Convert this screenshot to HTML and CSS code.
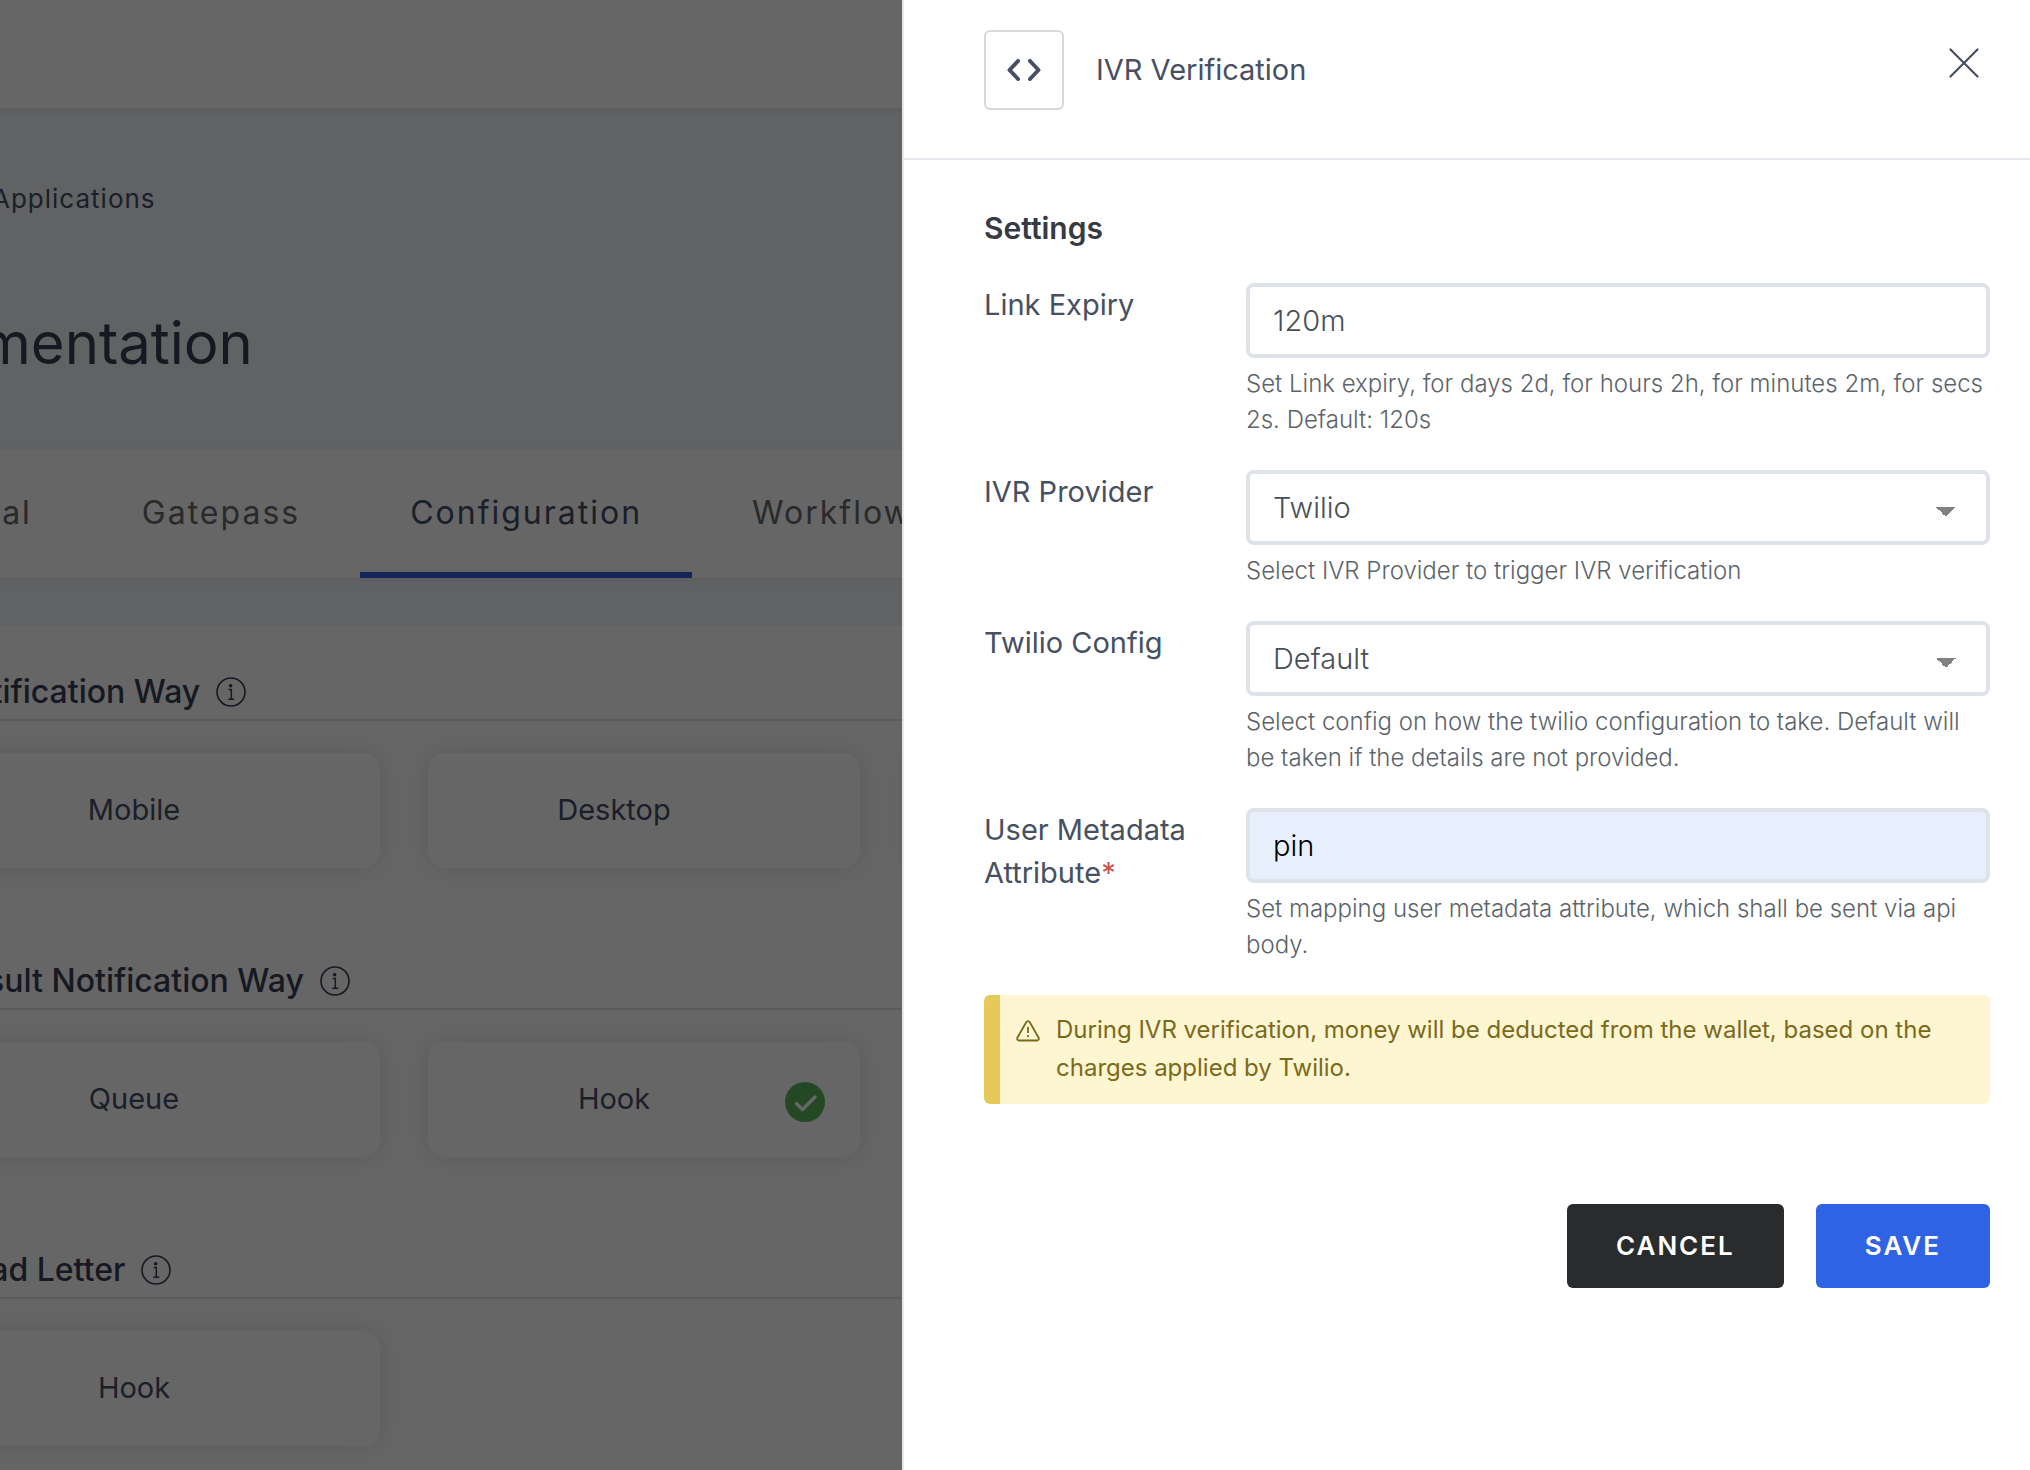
FILE: index.html
```html
<!DOCTYPE html>
<html lang="en">
<head>
<meta charset="utf-8">
<title>IVR Verification</title>
<link rel="stylesheet" href="styles.css">
</head>
<body>
<svg class="sprite" aria-hidden="true">
  <symbol id="info" viewBox="0 0 30 30">
    <circle cx="15" cy="15" r="14" fill="none" stroke="currentColor" stroke-width="1.6"/>
    <circle cx="14.6" cy="8.8" r="1.8" fill="currentColor"/>
    <path d="M12.6 12.6h2.7v9.5M12.2 22.2h6" fill="none" stroke="currentColor" stroke-width="1.5"/>
  </symbol>
</svg>
<div class="page" inert>
  <header class="topbar"></header>
  <nav class="crumbs" aria-label="Breadcrumb"><a href="#">Applications</a></nav>
  <h1 class="page-title">Documentation</h1>
  <nav class="tabs" aria-label="Sections">
    <a class="tab" href="#">General</a>
    <a class="tab" href="#">Gatepass</a>
    <a class="tab tab-active" href="#">Configuration</a>
    <a class="tab" href="#">Workflow</a>
  </nav>
  <main class="content">
    <section class="group">
      <h2 class="group-title">Notification Way <svg class="info"><use href="#info"/></svg></h2>
      <div class="cards">
        <button class="card" type="button">Mobile</button>
        <button class="card" type="button">Desktop</button>
        <div class="card"></div>
      </div>
    </section>
    <section class="group">
      <h2 class="group-title">Result Notification Way <svg class="info"><use href="#info"/></svg></h2>
      <div class="cards">
        <button class="card" type="button">Queue</button>
        <button class="card" type="button">Hook
          <svg class="check" viewBox="0 0 40 40"><circle cx="20" cy="20" r="20" fill="#5ab45a"/><path d="M11.5 21.5l6 6L30 15" fill="none" stroke="#fff" stroke-width="3.4" stroke-linecap="round" stroke-linejoin="round"/></svg>
        </button>
      </div>
    </section>
    <section class="group">
      <h2 class="group-title">Dead Letter <svg class="info"><use href="#info"/></svg></h2>
      <div class="cards">
        <button class="card" type="button">Hook</button>
      </div>
    </section>
  </main>
</div>
<div class="backdrop"></div>
<aside class="drawer" role="dialog" aria-labelledby="drawer-title">
  <header class="drawer-head">
    <span class="badge"><svg width="34" height="22" viewBox="0 0 34 22"><path d="M11 2L2.500 11l8.500 9M23 2l8.500 9-8.500 9" fill="none" stroke="currentColor" stroke-width="4" stroke-linecap="round" stroke-linejoin="round"/></svg></span>
    <h2 class="drawer-title" id="drawer-title">IVR Verification</h2>
    <button class="close" type="button" aria-label="Close"><svg width="30" height="30" viewBox="0 0 30 30"><path d="M1.500 1.500l27 27M28.500 1.500l-27 27" stroke="currentColor" stroke-width="2.200" stroke-linecap="round"/></svg></button>
  </header>
  <form class="form">
    <h3 class="form-title">Settings</h3>
    <div class="row">
      <label class="label" for="expiry">Link Expiry</label>
      <div class="field">
        <input class="control" id="expiry" type="text" value="120m">
        <p class="hint">Set Link expiry, for days 2d, for hours 2h, for minutes 2m, for secs 2s. Default: 120s</p>
      </div>
    </div>
    <div class="row">
      <label class="label" for="provider">IVR Provider</label>
      <div class="field">
        <select class="control select" id="provider"><option>Twilio</option></select>
        <p class="hint">Select IVR Provider to trigger IVR verification</p>
      </div>
    </div>
    <div class="row">
      <label class="label" for="config">Twilio Config</label>
      <div class="field">
        <select class="control select" id="config"><option>Default</option></select>
        <p class="hint">Select config on how the twilio configuration to take. Default will be taken if the details are not provided.</p>
      </div>
    </div>
    <div class="row">
      <label class="label" for="attribute">User Metadata Attribute<span class="required">*</span></label>
      <div class="field">
        <input class="control filled" id="attribute" type="text" value="pin">
        <p class="hint">Set mapping user metadata attribute, which shall be sent via api body.</p>
      </div>
    </div>
    <div class="alert" role="note">
      <svg class="alert-icon" viewBox="0 0 24 22"><path d="M10.200 2.200L1.500 17.500c-.8 1.500 0 3 1.700 3h17.600c1.700 0 2.500-1.500 1.700-3L13.800 2.200c-.8-1.400-2.800-1.400-3.600 0z" fill="none" stroke="currentColor" stroke-width="1.800" stroke-linejoin="round"/><path d="M12 7v6M12 15v2" stroke="currentColor" stroke-width="1.800"/></svg>
      <p class="alert-text">During IVR verification, money will be deducted from the wallet, based on the charges applied by Twilio.</p>
    </div>
    <div class="actions">
      <button class="btn btn-dark" type="button">CANCEL</button>
      <button class="btn btn-primary" type="submit">SAVE</button>
    </div>
  </form>
</aside>
</body>
</html>
```
FILE: styles.css
```css
* { box-sizing: border-box; }
body {
  margin: 0;
  overflow: hidden;
  font-family: Inter, "Liberation Sans", sans-serif;
  font-size: 29px;
  color: #475062;
}
h1, h2, h3, p { margin: 0; font-weight: 400; }
button, input, select { font: inherit; color: inherit; margin: 0; }
a { color: inherit; text-decoration: none; }
.sprite { position: absolute; width: 0; height: 0; }

/* Page behind the drawer, scrolled to the right */
.page {
  height: 100vh;
  margin-left: -168px;
  overflow: hidden;
  background: #f2f5f8;
  color: #454e68;
}
.topbar { height: 108px; background: #fff; box-shadow: 0 2px 10px rgba(0, 0, 0, .08); }
.crumbs { padding: 72px 0 0 160px; font-size: 26px; line-height: 38px; letter-spacing: 1px; }
.page-title { padding: 89px 0 71px 4px; font-size: 58px; line-height: 72px; color: #373f55; }
.tabs {
  display: flex;
  gap: 10px;
  padding-left: 18px;
  background: #fff;
  box-shadow: 0 2px 8px rgba(0, 0, 0, .06);
}
.tab {
  padding: 43px 50px 39px;
  border-bottom: 6px solid transparent;
  font-size: 32px;
  line-height: 40px;
  letter-spacing: 2px;
  color: #696969;
}
.tab-active { border-color: #2e60e0; color: #454e68; }
.content { margin-top: 48px; padding: 43px 0 0 116px; background: #fff; }
.group { height: 289px; }
.group-title {
  display: flex;
  align-items: center;
  gap: 16px;
  padding-bottom: 4px;
  border-bottom: 2px solid #e4e4e4;
  font-size: 32px;
  font-weight: 500;
  line-height: 46px;
  color: #373f55;
}
.info { width: 30px; height: 30px; }
.cards { display: flex; gap: 48px; padding-top: 32px; }
.card {
  position: relative;
  flex: none;
  width: 432px;
  height: 115px;
  padding: 0 60px 2px 0;
  border: 0;
  border-radius: 16px;
  background: #fff;
  box-shadow: 0 0 24px rgba(0, 0, 0, .12);
}
.check { position: absolute; top: 40px; right: 35px; width: 40px; height: 40px; }

.backdrop { position: fixed; inset: 0; background: rgba(0, 0, 0, .6); }

.drawer {
  position: fixed;
  inset: 0 0 0 auto;
  width: 1128px;
  max-width: 100%;
  overflow: auto;
  border-left: 2px solid #e8e8e8;
  background: #fff;
}
.drawer-head {
  display: flex;
  align-items: center;
  padding: 30px 47px 48px 80px;
  border-bottom: 2px solid #e8e8ee;
}
.badge {
  display: grid;
  place-items: center;
  width: 80px;
  height: 80px;
  border: 2px solid #d9d9d9;
  border-radius: 6px;
}
.drawer-title { flex: 1; margin-left: 32px; font-size: 29px; line-height: 40px; }
.close { display: grid; padding: 4px; margin-bottom: 14px; border: 0; background: none; }
.form { padding: 47px 40px 48px 80px; }
.form-title { margin-bottom: 34px; font-size: 30px; font-weight: 600; line-height: 42px; color: #383a42; }
.row { display: grid; grid-template-columns: 262px 1fr; margin-bottom: 32px; }
.label { padding-right: 40px; line-height: 43px; }
.required { color: #c9524a; }
.control {
  display: block;
  width: 100%;
  height: 75px;
  padding: 0 23px;
  border: 4px solid #dee2eb;
  border-radius: 8px;
  background-color: #fff;
  font-weight: 300;
  color: #495057;
}
.select {
  appearance: none;
  background-image: linear-gradient(to bottom left, #808080 50%, transparent 50%), linear-gradient(to bottom right, #808080 50%, transparent 50%);
  background-size: 10px 10px;
  background-repeat: no-repeat;
  background-position: right 40px top 33px, right 30px top 33px;
}
.filled { background-color: #e8effc; color: #000; }
.hint { margin-top: 8px; font-size: 24px; font-weight: 300; line-height: 36px; color: #5c646a; }
.alert {
  display: flex;
  gap: 16px;
  padding: 16px 16px 17px;
  border-left: 16px solid #e5ca5a;
  border-radius: 6px;
  background: #fef5d1;
  font-size: 24px;
  font-weight: 500;
  line-height: 38px;
  color: #7a6a1c;
}
.alert-icon { flex: none; width: 24px; height: 22px; margin-top: 9px; }
.actions { display: flex; justify-content: flex-end; gap: 32px; margin-top: 100px; }
.btn {
  height: 84px;
  padding: 0 49px 2px;
  border: 0;
  border-radius: 6px;
  font-size: 26px;
  font-weight: 600;
  letter-spacing: 2px;
  color: #fff;
}
.btn-dark { background: #2a2b2d; }
.btn-primary { background: #3063e4; }
```
